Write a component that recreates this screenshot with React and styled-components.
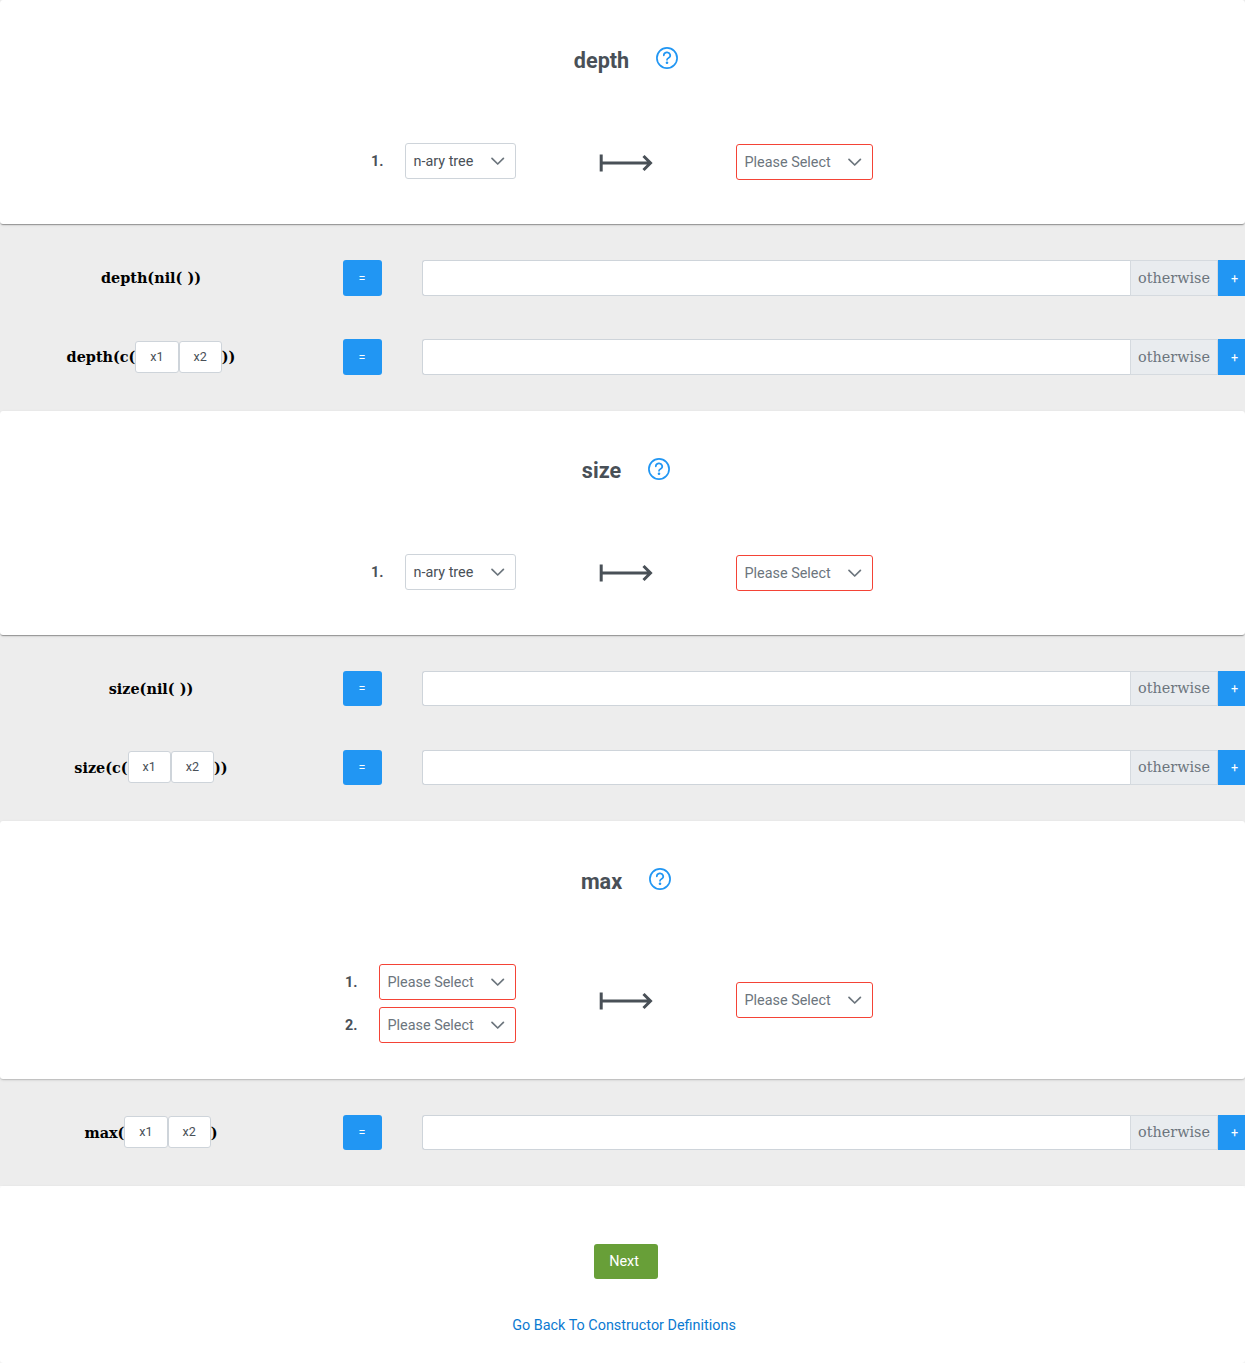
import React from "react";
import styled, { createGlobalStyle } from "styled-components";

const GlobalStyle = createGlobalStyle`
  *, *::before, *::after { box-sizing: border-box; }
  html, body { margin: 0; background: #fff; }
  body { overflow: hidden; font: 14.4px/17px Roboto, sans-serif; color: #495057; }
  button { font-family: inherit; margin: 0; }
`;

const Page = styled.main`
  width: 1245px;
  height: 1363px;
  overflow: hidden;
`;

const Panel = styled.section`
  background: #ededed;
`;

const Card = styled.header`
  height: ${(p) => p.$height}px;
  padding-top: 46px;
  background: #fff;
  border-radius: 3px;
  box-shadow: 0 2px 1px -1px rgba(0, 0, 0, ${(p) => (p.$soft ? 0.04 : 0.2)}),
    0 1px 1px rgba(0, 0, 0, ${(p) => (p.$soft ? 0.08 : 0.14)}),
    0 1px 3px rgba(0, 0, 0, 0.12);
`;

const TitleRow = styled.div`
  display: flex;
  justify-content: center;
  gap: 27px;
  height: 28px;
  padding-left: 7px;
`;

const Title = styled.h2`
  margin: 0;
  padding-top: ${(p) => p.$drop}px;
  font-size: 21.6px;
  line-height: 28px;
  font-weight: 700;
`;

const HelpIcon = styled.svg`
  width: 22px;
  height: 22px;
  margin-top: 1px;
  fill: none;
  stroke: #2196f3;
`;

const Signature = styled.div`
  display: grid;
  grid-template-columns: 516px 220px 1fr;
  align-items: center;
  padding-top: ${(p) => p.$top}px;
`;

const Arguments = styled.ol`
  display: flex;
  flex-direction: column;
  gap: 7px;
  align-items: flex-end;
  margin: 0;
  padding: 0;
  list-style: none;
`;

const Argument = styled.li`
  display: flex;
  align-items: center;
  gap: 21.5px;
  font-weight: 700;
`;

const Select = styled.button`
  display: flex;
  align-items: center;
  justify-content: space-between;
  width: ${(p) => (p.$empty ? 137 : 111)}px;
  height: 36px;
  margin-top: ${(p) => p.$drop || 0}px;
  padding: 0 10px 0 7.5px;
  border: 1px solid ${(p) => (p.$empty ? "#f44336" : "#ced4da")};
  border-radius: 3px;
  background: #fff;
  color: ${(p) => (p.$empty ? "#6c757d" : "#495057")};
  font-size: 14.4px;
  line-height: 17px;
  white-space: nowrap;
`;

const Chevron = styled.svg`
  width: 14px;
  height: 9px;
  fill: none;
  stroke: #6c757d;
  stroke-width: 1.7;
  stroke-linecap: round;
  stroke-linejoin: round;
`;

const Arrow = styled.svg`
  width: 54px;
  height: 18px;
  margin: ${(p) => p.$drop}px 0 0 83px;
  fill: none;
  stroke: #495057;
  stroke-width: 3;
`;

const Equations = styled.div`
  display: flex;
  flex-direction: column;
  gap: ${(p) => 79 - p.$rowHeight}px;
  padding-top: 36px;
  height: ${(p) => p.$height}px;
`;

const Equation = styled.div`
  display: grid;
  grid-template-columns: 302px 120px 708px 88px 33px;
  align-items: center;
  height: ${(p) => p.$height}px;
`;

const Pattern = styled.div`
  display: flex;
  justify-content: center;
  align-items: center;
  height: 32px;
  color: #000;
  font: bold 14.4px/18px "DejaVu Serif", serif;
  white-space: pre;
`;

const Variable = styled.span`
  display: flex;
  align-items: center;
  justify-content: center;
  width: 43.2px;
  height: 32px;
  margin-top: -1px;
  border: 1px solid #ced4da;
  border-radius: 3px;
  background: #fff;
  color: #495057;
  font: 12.6px/16px Roboto, sans-serif;
`;

const BlueButton = styled.button`
  justify-self: ${(p) => (p.$joined ? "stretch" : "center")};
  width: ${(p) => (p.$joined ? "auto" : "39px")};
  height: 100%;
  padding: 0;
  border: 0;
  border-radius: ${(p) => (p.$joined ? 0 : 3)}px;
  background: #2196f3;
  color: #fff;
  font-size: 12.6px;
`;

const ValueInput = styled.input`
  width: 100%;
  height: 100%;
  border: 1px solid #ced4da;
  border-right: 0;
  border-radius: 3px 0 0 3px;
  background: #fff;
  outline: 0;
`;

const Otherwise = styled.div`
  display: flex;
  align-items: center;
  justify-content: center;
  height: 100%;
  border: 1px solid #d5dadf;
  background: #e9ecef;
  color: #6c757d;
  font: 14.4px/17px "DejaVu Serif", serif;
`;

const Footer = styled.footer`
  display: flex;
  flex-direction: column;
  align-items: center;
  height: 177px;
  padding: 58px 0 0 3px;
  background: #fff;
  border-radius: 3px;
  box-shadow: 0 1px 3px rgba(0, 0, 0, 0.12);
`;

const NextButton = styled.button`
  width: 64px;
  height: 35px;
  padding: 0 4px 0 0;
  margin-left: 4px;
  border: 0;
  border-radius: 3px;
  background: #689f38;
  color: #fff;
  font-size: 14.4px;
`;

const BackLink = styled.a`
  margin-top: 38px;
  color: #0b7ad1;
  font-size: 14.4px;
  line-height: 17px;
`;

function Dropdown({ value, drop }) {
  return (
    <Select type="button" $empty={!value} $drop={drop}>
      <span>{value || "Please Select"}</span>
      <Chevron viewBox="0 0 14 9">
        <path d="M1 1.3 6.7 7l5.7-5.7" />
      </Chevron>
    </Select>
  );
}

function Help() {
  return (
    <HelpIcon viewBox="0 0 22 22">
      <circle cx="11" cy="11" r="10.1" strokeWidth="1.7" />
      <path
        d="M7.8 8.3a3.2 3 0 1 1 4.7 2.7c-1 .5-1.5.9-1.5 1.8"
        strokeWidth="1.7"
        strokeLinecap="round"
      />
      <circle cx="11" cy="15.8" r="1.3" fill="#2196f3" stroke="none" />
    </HelpIcon>
  );
}

const functions = [
  {
    name: "depth",
    args: ["n-ary tree"],
    height: 224,
    bodyHeight: 187,
    rowHeight: 36,
    titleDrop: 1,
    signatureTop: 68,
    arrowDrop: 4,
    equations: [
      ["depth(nil( ))", [], ""],
      ["depth(c(", ["x1", "x2"], "))"],
    ],
  },
  {
    name: "size",
    args: ["n-ary tree"],
    height: 224,
    bodyHeight: 186,
    rowHeight: 35,
    titleDrop: 0,
    signatureTop: 68,
    arrowDrop: 2,
    equations: [
      ["size(nil( ))", [], ""],
      ["size(c(", ["x1", "x2"], "))"],
    ],
  },
  {
    name: "max",
    args: ["", ""],
    height: 258,
    bodyHeight: 107,
    rowHeight: 35,
    titleDrop: 1,
    signatureTop: 69,
    arrowDrop: -6,
    soft: true,
    equations: [["max(", ["x1", "x2"], ")"]],
  },
];

function FunctionPanel({ fn }) {
  return (
    <Panel>
      <Card $height={fn.height} $soft={fn.soft}>
        <TitleRow>
          <Title $drop={fn.titleDrop}>{fn.name}</Title>
          <Help />
        </TitleRow>
        <Signature $top={fn.signatureTop}>
          <Arguments>
            {fn.args.map((value, i) => (
              <Argument key={i}>
                <span>{i + 1}.</span>
                <Dropdown value={value} />
              </Argument>
            ))}
          </Arguments>
          <Arrow viewBox="0 0 54 18" $drop={fn.arrowDrop}>
            <path d="M2.2 0.5V17.5M2 9h49.5M44.5 2l7 7-7 7" />
          </Arrow>
          <Dropdown drop={fn.args.length === 1 ? 2 : -7} />
        </Signature>
      </Card>
      <Equations $height={fn.bodyHeight} $rowHeight={fn.rowHeight}>
        {fn.equations.map(([start, vars, end]) => (
          <Equation key={start} $height={fn.rowHeight}>
            <Pattern>
              <span>{start}</span>
              {vars.map((v) => (
                <Variable key={v}>{v}</Variable>
              ))}
              <span>{end}</span>
            </Pattern>
            <BlueButton type="button">=</BlueButton>
            <ValueInput aria-label={`${start} value`} />
            <Otherwise>otherwise</Otherwise>
            <BlueButton type="button" $joined>
              +
            </BlueButton>
          </Equation>
        ))}
      </Equations>
    </Panel>
  );
}

export default function App() {
  return (
    <>
      <GlobalStyle />
      <Page>
        {functions.map((fn) => (
          <FunctionPanel key={fn.name} fn={fn} />
        ))}
        <Footer>
          <NextButton type="button">Next</NextButton>
          <BackLink>Go Back To Constructor Definitions</BackLink>
        </Footer>
      </Page>
    </>
  );
}
